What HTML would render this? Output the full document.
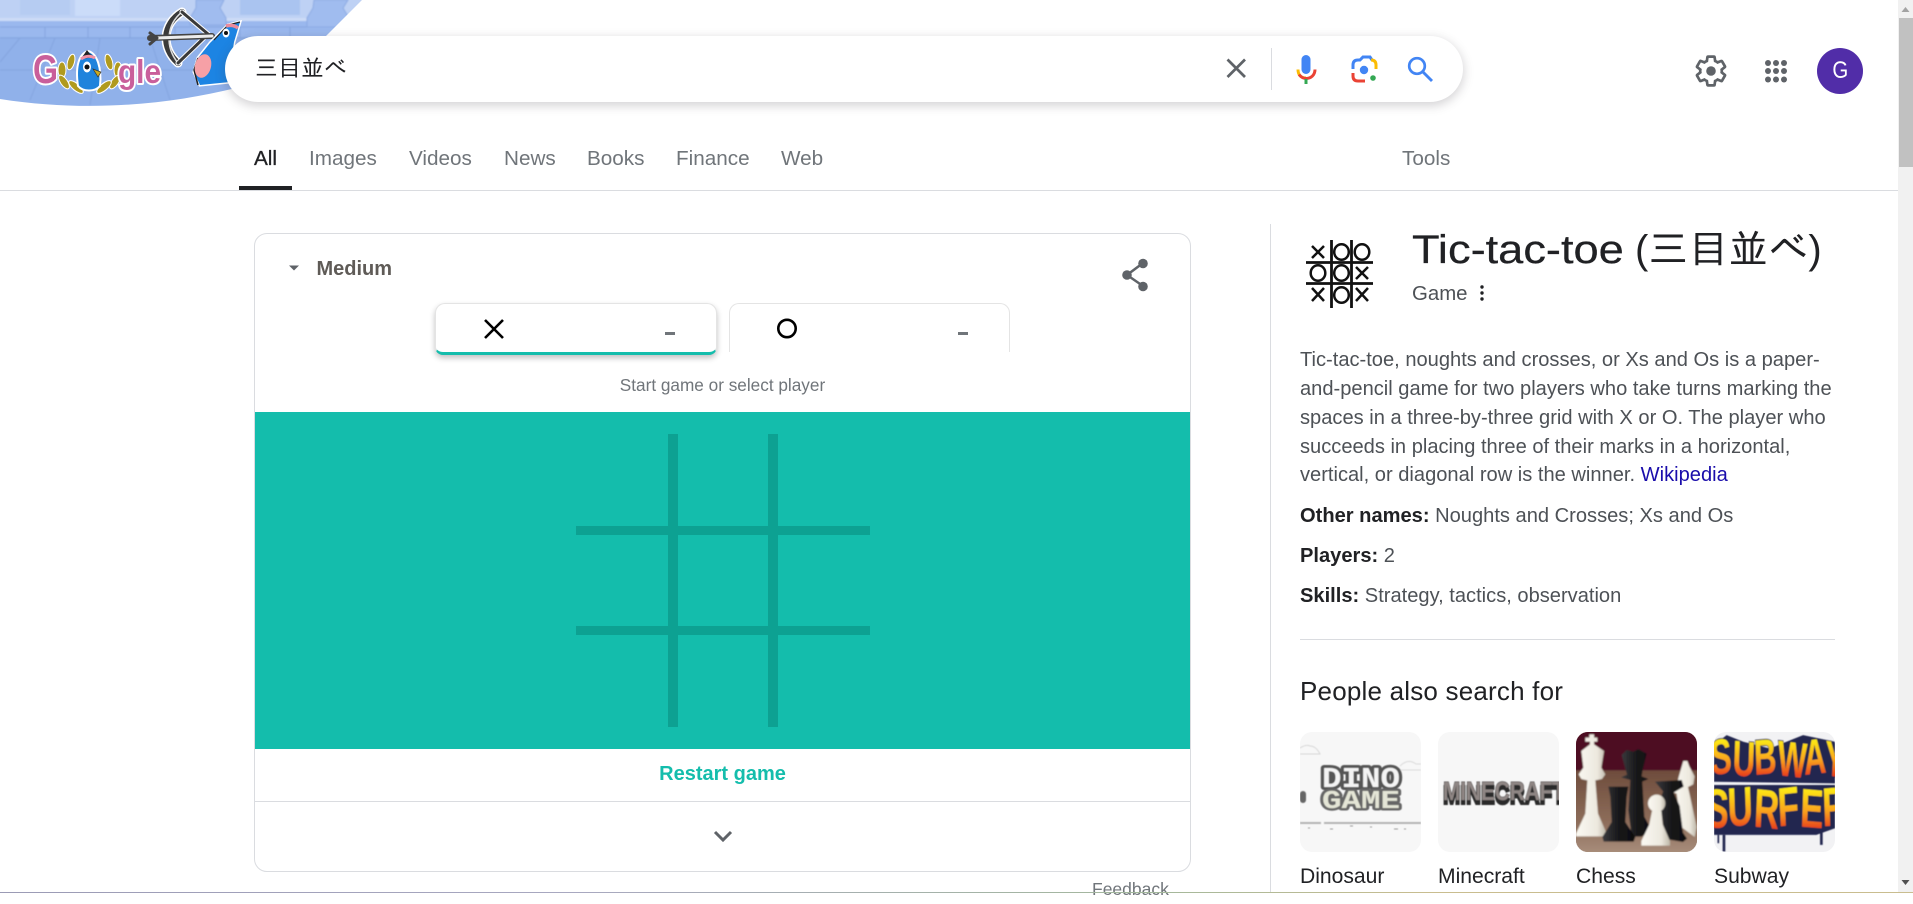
<!DOCTYPE html>
<html lang="ja"><head><meta charset="utf-8"><title>三目並べ</title>
<style>
html,body{margin:0;padding:0;background:#fff}
body{width:1913px;height:893px;overflow:hidden;position:relative;font-family:"Liberation Sans","Noto Sans CJK JP",sans-serif;color:#4d5156}
.t{position:absolute;white-space:nowrap;line-height:30px;height:30px}
.a{position:absolute}
svg{display:block;position:absolute;overflow:hidden}
.tab{font-size:20.700px;color:#70757a;top:144px}
.d{font-size:20.100px;color:#4d5156;left:1300px}
.d b{color:#202124}
.lab{font-size:21.100px;color:#202124;top:862px}
.img{position:absolute;top:732px;width:121px;height:120px;border-radius:12px;overflow:hidden;background:#f7f7f7}
.img svg{left:0;top:0}
</style></head><body>

<!-- doodle -->
<svg style="left:0;top:0" width="370" height="112" viewBox="0 0 370 112">
<defs><clipPath id="dc"><path d="M0 0H362L326 36V88H236C170 104 90 113 0 99Z"/></clipPath>
<filter id="bl" x="-5%" y="-5%" width="110%" height="110%"><feGaussianBlur stdDeviation=".8"/></filter></defs>
<g clip-path="url(#dc)"><g filter="url(#bl)">
<rect x="-5" y="-5" width="380" height="120" fill="#90b1ea"/>
<rect x="-5" y="-5" width="380" height="23" fill="#bed1f4"/>
<rect x="20" y="-5" width="50" height="20" fill="#b6ccf2"/><rect x="75" y="-5" width="45" height="21" fill="#cbdcf9"/>
<rect x="240" y="-5" width="60" height="20" fill="#aac4f0"/>
<rect y="18" x="-5" width="380" height="3" fill="#cddcf7"/>
<rect y="21" x="-5" width="380" height="16" fill="#9ab8ee"/>
<g stroke="#84a4de" stroke-width="1" fill="none">
<path d="M0 27H370M0 38H370M45 27V38M88 27V38M130 27V38M175 27V38M240 27V38M290 27V38"/>
<path d="M20 38L0 62M55 38L30 100M100 38L90 105M150 38L170 100M205 38L230 85M0 70H240"/>
</g>
<path d="M196 0h28l-4 8 6 10v7h-36v-7l6-10z" fill="#a0bcef" stroke="#8aa9e2"/>
<path d="M314 0h34l-5 8 6 10v9h-42v-9l6-10z" fill="#a0bcef" stroke="#8aa9e2"/>
</g></g>
<!-- logo -->
<g fill="#b09a1e" stroke="#fff" stroke-width="1">
<ellipse cx="62" cy="70" rx="4" ry="8"/><ellipse cx="71" cy="62" rx="3.500" ry="8" transform="rotate(15 71 62)"/><ellipse cx="64" cy="82" rx="3.500" ry="8" transform="rotate(-35 64 82)"/><ellipse cx="76" cy="87" rx="9" ry="3.500" transform="rotate(40 76 87)"/>
<ellipse cx="118" cy="70" rx="4" ry="8"/><ellipse cx="109" cy="62" rx="3.500" ry="8" transform="rotate(-15 109 62)"/><ellipse cx="115" cy="82" rx="3.500" ry="8" transform="rotate(35 115 82)"/><ellipse cx="104" cy="87" rx="9" ry="3.500" transform="rotate(-40 104 87)"/>
</g>
<g font-family="Liberation Sans,sans-serif" font-weight="700" fill="#c95f9b" stroke="#fff" stroke-width="4" paint-order="stroke" stroke-linejoin="round">
<text x="33" y="83" font-size="40" textLength="25" lengthAdjust="spacingAndGlyphs">G</text>
<text x="118" y="83" font-size="33" textLength="43" lengthAdjust="spacingAndGlyphs">gle</text>
</g>
<path d="M78 86C75 66 79 54 88 51 97 53 102 68 100 86 95 92 83 92 78 86Z" fill="#1f83dc" stroke="#fff" stroke-width="2"/>
<path d="M81 59 87 50 90 54 95 57Z" fill="#222"/>
<path d="M81 59Q88 54 95 58" stroke="#f090a5" stroke-width="3" fill="none"/>
<ellipse cx="87" cy="67" rx="4" ry="5.500" fill="#fff"/><circle cx="87" cy="67" r="2.500" fill="#111"/>
<path d="M93 69l8 3-3 5z" fill="#c9a81f" stroke="#333" stroke-width=".7"/>
<!-- archer -->
<g fill="none" stroke-linecap="round" stroke-linejoin="round">
<path d="M182 12C162 24 161 48 178 63" stroke="#fff" stroke-width="9"/>
<path d="M182 12C162 24 161 48 178 63" stroke="#3a3a3a" stroke-width="6"/>
<path d="M182 12C166 25 165 47 178 63" stroke="#ddd" stroke-width="1.500"/>
<path d="M182 12 208 34 178 63" stroke="#fff" stroke-width="5"/>
<path d="M182 12 208 34 178 63" stroke="#3a3a3a" stroke-width="3"/>
<path d="M150 38 212 36" stroke="#444" stroke-width="6"/>
<path d="M156 38 212 36" stroke="#ececec" stroke-width="3"/>
<path d="M150 33l7 5-7 6" stroke="#444" stroke-width="3"/>
</g>
<path d="M240 22 228 25 210 43 198 58 194 72 200 85 230 82 232 55 234 42Z" fill="#1c84e3" stroke="#fff" stroke-width="3" paint-order="stroke"/>
<path d="M240 22 228 25 214 40" fill="none" stroke="#222" stroke-width="1.200"/>
<path d="M198 85 194 70 198 58" fill="none" stroke="#222" stroke-width="1.500"/>
<path d="M226 26Q233 24 238 28" stroke="#ec8a9c" stroke-width="3.500" fill="none"/>
<ellipse cx="226" cy="33" rx="3.500" ry="4.500" fill="#fff"/><circle cx="226" cy="33" r="2" fill="#111"/>
<ellipse cx="203" cy="66" rx="8" ry="12" fill="#f6a0a6" transform="rotate(15 203 66)"/>
</svg>

<!-- search box -->
<div class="a" style="left:225px;top:36px;width:1238px;height:66px;border-radius:33px;background:#fff;box-shadow:0 3px 10px 1px rgba(64,60,67,.22)"></div>
<div class="t" style="left:255px;top:53px;font-size:23px;color:#202124;font-family:'Liberation Sans','IPAGothic','Noto Sans CJK JP',sans-serif">三目並べ</div>
<svg style="left:1222px;top:44px" width="240" height="50" viewBox="1222 44 240 50">
<path d="M1227.500 59.500 1245 77M1245 59.500 1227.500 77" stroke="#5f6368" stroke-width="2.700" fill="none"/>
<rect x="1271" y="48" width="1" height="42" fill="#dadce0"/>
<rect x="1301.500" y="55" width="9" height="19" rx="4.500" fill="#4285f4"/>
<path d="M1298 69.500C1298 75 1301 78 1306 78" stroke="#fbbc04" stroke-width="3" fill="none"/>
<path d="M1299 74.500C1301 77 1303 78.500 1306 78.500 1311 78.500 1315 75 1315 69.500" stroke="#ea4335" stroke-width="3" fill="none"/>
<rect x="1304.500" y="79" width="3" height="5" fill="#34a853"/>
<path d="M1353 69V65Q1353 60 1358 60H1360L1363 57H1370L1372 60" stroke="#4285f4" stroke-width="3" fill="none"/>
<path d="M1371 60Q1376 60 1376 65V69" stroke="#fbbc04" stroke-width="3" fill="none"/>
<path d="M1353 73V76Q1353 81 1358 81H1365" stroke="#ea4335" stroke-width="3" fill="none"/>
<circle cx="1364" cy="70" r="4.200" fill="#4285f4"/><circle cx="1373" cy="78" r="2.800" fill="#34a853"/>
<circle cx="1417" cy="66" r="7.800" stroke="#4285f4" stroke-width="2.700" fill="none"/>
<path d="M1423 72 1432 81" stroke="#4285f4" stroke-width="2.900"/>
</svg>

<!-- header right -->
<svg style="left:1693px;top:53px" width="36" height="36" viewBox="0 0 24 24"><path fill="none" stroke="#5f6368" stroke-width="1.800" d="M19.140 12.940c.04-.3.06-.61.06-.94 0-.32-.02-.64-.07-.94l2.030-1.580c.18-.14.23-.41.12-.61l-1.920-3.320c-.12-.22-.37-.29-.59-.22l-2.390.96c-.5-.38-1.030-.7-1.620-.94L14.400 2.810c-.04-.24-.24-.41-.48-.41h-3.840c-.24 0-.43.17-.47.41L9.250 5.350C8.660 5.590 8.120 5.920 7.630 6.290L5.240 5.330c-.22-.08-.47 0-.59.22L2.740 8.870C2.620 9.080 2.660 9.340 2.860 9.480l2.030 1.580C4.840 11.360 4.800 11.690 4.800 12s.02.64.07.94l-2.030 1.580c-.18.14-.23.41-.12.61l1.920 3.320c.12.22.37.29.59.22l2.390-.96c.5.38 1.030.7 1.620.94l.36 2.540c.05.24.24.41.48.41h3.840c.24 0 .44-.17.47-.41l.36-2.540c.59-.24 1.130-.56 1.620-.94l2.390.96c.22.08.47 0 .59-.22l1.920-3.320c.12-.22.07-.47-.12-.61L19.140 12.940z"/><circle cx="12" cy="12" r="3.200" fill="#5f6368"/></svg>
<svg style="left:1762px;top:57px" width="28" height="28" viewBox="0 0 28 28" fill="#5f6368"><circle cx="6" cy="6" r="3"/><circle cx="14" cy="6" r="3"/><circle cx="22" cy="6" r="3"/><circle cx="6" cy="14" r="3"/><circle cx="14" cy="14" r="3"/><circle cx="22" cy="14" r="3"/><circle cx="6" cy="22.500" r="3"/><circle cx="14" cy="22.500" r="3"/><circle cx="22" cy="22.500" r="3"/></svg>
<div class="a" style="left:1817px;top:48px;width:46px;height:46px;border-radius:50%;background:#512da8;color:#fff;font-size:24px;line-height:46px;text-align:center"><span style="display:inline-block;transform:scaleX(.85)">G</span></div>

<!-- tabs -->
<div class="t tab" style="left:254px;color:#202124;-webkit-text-stroke:.3px #202124">All</div>
<div class="t tab" style="left:309px">Images</div>
<div class="t tab" style="left:409px">Videos</div>
<div class="t tab" style="left:504px">News</div>
<div class="t tab" style="left:587px">Books</div>
<div class="t tab" style="left:676px">Finance</div>
<div class="t tab" style="left:781px">Web</div>
<div class="t tab" style="left:1402px">Tools</div>
<div class="a" style="left:239px;top:186px;width:53px;height:4px;background:#202124"></div>
<div class="a" style="left:0;top:190px;width:1898px;height:1px;background:#dadce0"></div>

<!-- game card -->
<div class="a" style="left:254px;top:233px;width:935px;height:637px;border:1px solid #dadce0;border-radius:13px"></div>
<svg style="left:287px;top:264px" width="14" height="8" viewBox="0 0 14 8"><path d="M2 1.500H12L7 6.500Z" fill="#5f6368"/></svg>
<div class="t" style="left:316.500px;top:254px;font-size:20px;font-weight:700;color:#5f5b57">Medium</div>
<svg style="left:1118px;top:258px" width="34" height="34" viewBox="1118 258 34 34"><path d="M1143 263 1127 275 1143 286" stroke="#5f6368" stroke-width="2.500" fill="none"/><circle cx="1143" cy="263.500" r="4.800" fill="#5f6368"/><circle cx="1127" cy="275" r="4.800" fill="#5f6368"/><circle cx="1143" cy="286.500" r="4.800" fill="#5f6368"/></svg>

<div class="a" style="left:435px;top:303px;width:280px;height:48px;border:1px solid #e4e4e4;border-radius:10px 10px 8px 8px;box-shadow:0 3px 6px rgba(32,33,36,.28);background:#fff;border-bottom:3px solid #14bdac"></div>
<div class="a" style="left:729px;top:303px;width:279px;height:48px;border:1px solid #e4e4e4;border-bottom:0;border-radius:10px 10px 0 0;background:#fff"></div>
<svg style="left:480px;top:315px" width="28" height="28" viewBox="0 0 28 28"><path d="M5 5 23 23M23 5 5 23" stroke="#000" stroke-width="2.600"/></svg>
<svg style="left:773px;top:315px" width="28" height="28" viewBox="0 0 28 28"><circle cx="14" cy="13.500" r="8.700" stroke="#000" stroke-width="2.600" fill="none"/></svg>
<div class="a" style="left:665px;top:332px;width:10px;height:3px;background:#70757a"></div>
<div class="a" style="left:958px;top:332px;width:10px;height:3px;background:#70757a"></div>
<div class="t" style="left:255px;width:935px;text-align:center;top:370px;font-size:17.200px;color:#70757a">Start game or select player</div>

<div class="a" style="left:255px;top:412px;width:935px;height:337px;background:#14bdac"></div>
<div class="a" style="left:668px;top:434px;width:10px;height:293px;background:#0da192"></div>
<div class="a" style="left:768px;top:434px;width:10px;height:293px;background:#0da192"></div>
<div class="a" style="left:576px;top:526px;width:294px;height:9px;background:#0da192"></div>
<div class="a" style="left:576px;top:626px;width:294px;height:9px;background:#0da192"></div>

<div class="t" style="left:255px;width:935px;text-align:center;top:759px;font-size:20px;font-weight:700;color:#14bdac">Restart game</div>
<div class="a" style="left:255px;top:801px;width:935px;height:1px;background:#dadce0"></div>
<svg style="left:711px;top:827px" width="24" height="20" viewBox="0 0 24 20"><path d="M4 5 12 13 20 5" stroke="#5f6368" stroke-width="3" fill="none"/></svg>
<div class="t" style="left:1092px;top:874px;font-size:17.500px;color:#70757a">Feedback</div>

<!-- right panel -->
<div class="a" style="left:1270px;top:224px;width:1px;height:669px;background:#dadce0"></div>
<svg style="left:1300px;top:236px" width="80" height="78" viewBox="1300 236 80 78" fill="none" stroke="#111">
<path d="M1331.500 240V308M1351.500 240V308M1306 262.500H1373M1306 283.500H1373" stroke-width="2.800"/>
<g stroke-width="2.500"><path d="M1312 246 1324 258M1324 246 1312 258M1356 267 1368 279M1368 267 1356 279M1312 288 1324 301M1324 288 1312 301M1356 288 1368 301M1368 288 1356 301"/>
<ellipse cx="1341.500" cy="252" rx="7.300" ry="7.800"/><ellipse cx="1362" cy="252" rx="7.300" ry="7.800"/><ellipse cx="1318" cy="273" rx="7.300" ry="7.800"/><ellipse cx="1341.500" cy="273" rx="7.300" ry="7.800"/><ellipse cx="1341.500" cy="295" rx="7.300" ry="7.800"/></g>
</svg>
<div class="t" style="left:1412px;top:235px;font-size:40px;color:#202124;transform:scaleX(1.13);transform-origin:left center;-webkit-text-stroke:.25px #202124">Tic-tac-toe</div>
<div class="t" style="left:1635px;top:235px;font-size:40px;color:#202124;font-family:'Liberation Sans','IPAGothic','Noto Sans CJK JP',sans-serif">(三目並べ)</div>
<div class="t" style="left:1412px;top:279px;font-size:20.400px;color:#4d5156">Game</div>
<svg style="left:1476px;top:282px" width="12" height="22" viewBox="0 0 12 22" fill="#202124"><circle cx="6" cy="5" r="1.700"/><circle cx="6" cy="11" r="1.700"/><circle cx="6" cy="17" r="1.700"/></svg>
<div class="t d" style="top:345px">Tic-tac-toe, noughts and crosses, or Xs and Os is a paper-</div>
<div class="t d" style="top:374px">and-pencil game for two players who take turns marking the</div>
<div class="t d" style="top:403px">spaces in a three-by-three grid with X or O. The player who</div>
<div class="t d" style="top:432px">succeeds in placing three of their marks in a horizontal,</div>
<div class="t d" style="top:460px">vertical, or diagonal row is the winner. <span style="color:#1a0dab">Wikipedia</span></div>
<div class="t d" style="top:501px"><b>Other names:</b> Noughts and Crosses; Xs and Os</div>
<div class="t d" style="top:541px"><b>Players:</b> 2</div>
<div class="t d" style="top:581px"><b>Skills:</b> Strategy, tactics, observation</div>
<div class="a" style="left:1300px;top:639px;width:535px;height:1px;background:#dadce0"></div>
<div class="t" style="left:1300px;top:676px;font-size:26px;letter-spacing:.2px;color:#202124">People also search for</div>

<div class="img" style="left:1300px">
<svg width="121" height="120" viewBox="0 0 121 120">
<defs><filter id="b1" x="-5%" y="-5%" width="110%" height="110%"><feGaussianBlur stdDeviation=".5"/></filter></defs>
<g filter="url(#b1)">
<path d="M0 16Q6 12 10 14 16 14 20 22H0" fill="none" stroke="#d8d8d8"/>
<path d="M100 34Q108 26 116 32H121M96 38H121" fill="none" stroke="#dcdcdc"/>
<g font-family="Liberation Mono,monospace" font-weight="700" stroke-linejoin="round" paint-order="stroke">
<text x="22" y="55" font-size="29" fill="#f4f4f4" stroke="#555" stroke-width="6" textLength="78" lengthAdjust="spacingAndGlyphs">DINO</text>
<text x="22" y="76" font-size="26" fill="#e4e5d6" stroke="#666" stroke-width="5" textLength="78" lengthAdjust="spacingAndGlyphs">GAME</text>
</g>
<rect x="0" y="59" width="6" height="12" rx="3" fill="#666"/>
<rect y="90" width="21" height="2" fill="#b5b5b5"/><rect x="24" y="90" width="97" height="2" fill="#b5b5b5"/>
<path d="M8 96h2M30 97h3M50 94h3M70 95h2M94 97h4M104 97h2" stroke="#999" stroke-width="1"/>
</g></svg></div>

<div class="img" style="left:1438px">
<svg width="121" height="120" viewBox="0 0 121 120">
<defs><filter id="b2" x="-5%" y="-5%" width="110%" height="110%"><feGaussianBlur stdDeviation=".45"/></filter></defs>
<g filter="url(#b2)" font-family="Liberation Sans,sans-serif" font-weight="700" font-size="26">
<text x="5" y="72" fill="#2a2a2a" stroke="#2a2a2a" stroke-width="2" textLength="122" lengthAdjust="spacingAndGlyphs">MINECRAFT</text>
<text x="5" y="68" fill="#8f8684" stroke="#3a3a3a" stroke-width="1" paint-order="stroke" textLength="122" lengthAdjust="spacingAndGlyphs">MINECRAFT</text>
</g></svg></div>

<div class="img" style="left:1576px;background:#8a6a58">
<svg width="121" height="120" viewBox="18 21 363 360">
<defs><filter id="b3" x="-5%" y="-5%" width="110%" height="110%"><feGaussianBlur stdDeviation="2.500"/></filter>
<linearGradient id="bd" x1="0" y1="0" x2="0" y2="1"><stop offset="0" stop-color="#6e4c3c"/><stop offset=".6" stop-color="#8d6d5a"/><stop offset="1" stop-color="#ab917f"/></linearGradient>
<linearGradient id="wp" x1="0" y1="0" x2="1" y2="0"><stop offset="0" stop-color="#fbf9f2"/><stop offset=".7" stop-color="#ece8de"/><stop offset="1" stop-color="#bdb7a8"/></linearGradient>
<linearGradient id="kp" x1="0" y1="0" x2="1" y2="0"><stop offset="0" stop-color="#3a3a3e"/><stop offset=".5" stop-color="#18181a"/><stop offset="1" stop-color="#0c0c0e"/></linearGradient></defs>
<g filter="url(#b3)">
<rect x="0" y="0" width="400" height="140" fill="#4e0d22"/>
<rect x="0" y="136" width="400" height="260" fill="url(#bd)"/>
<path d="M58 28h14v10h10v12H72v8l30 20-8 50 12 20-10 14 -20 4 8 100 26 60v8H18v-8l28-60 6-100-18-4-8-14 14-20-6-50 26-20v-8H46V38h12z" fill="url(#wp)"/>
<path d="M340 108h12l6 16 16 30-4 24-16 8 26 120-6 30-40-30-14-100-10-4 10-20 6-26z" fill="url(#wp)"/>
<path d="M155 90l15-15 20 5 15-8 25 14-12 50-3 18 20 8-18 8 6 105 22 40-30 20h-30l-10-80 6-90-28-8 18-8z" fill="url(#kp)"/>
<path d="M115 185h60l-5 30-4 76 30 45-5 14h-90l-4-14 28-45-4-76z" fill="url(#kp)"/>
<path d="M255 170l80-5 6 20-30 18 18 40 10 80 12 18-12 10-70-12 10-40-10-70 10-30z" fill="url(#kp)"/>
<circle cx="260" cy="235" r="26" fill="url(#wp)"/>
<path d="M246 258h28l4 40 22 50v14h-86v-14l24-50z" fill="url(#wp)"/>
</g></svg></div>

<div class="img" style="left:1714px;background:#f2f2f4">
<svg width="121" height="120" viewBox="432 21 364 360">
<defs>
<linearGradient id="sg2" gradientUnits="userSpaceOnUse" x1="0" y1="40" x2="0" y2="150"><stop offset="0" stop-color="#fdf013"/><stop offset=".6" stop-color="#f9a11c"/><stop offset="1" stop-color="#e8431c"/></linearGradient>
<linearGradient id="sg3" gradientUnits="userSpaceOnUse" x1="0" y1="185" x2="0" y2="310"><stop offset="0" stop-color="#fdf013"/><stop offset=".6" stop-color="#f9a11c"/><stop offset="1" stop-color="#e8431c"/></linearGradient>
<filter id="b4" x="-5%" y="-5%" width="110%" height="110%"><feGaussianBlur stdDeviation="1.500"/></filter>
</defs>
<g filter="url(#b4)">
<path d="M432 60 470 30 520 50 600 70 700 30 796 50V175L432 170ZM432 180H796V310L740 330H432Z" fill="#24264f"/>
<g font-family="Liberation Sans,sans-serif" font-weight="700" stroke="#24264f" stroke-width="5" paint-order="stroke">
<text x="425" y="150" font-size="150" fill="url(#sg2)" textLength="400" lengthAdjust="spacingAndGlyphs" rotate="-4 3 -3 4 -4 5">SUBWAY</text>
<text x="405" y="305" font-size="165" fill="url(#sg3)" textLength="500" lengthAdjust="spacingAndGlyphs" rotate="3 -3 4 -4 3 -3 4">SURFERS</text>
</g>
<path d="M462 330v50M755 320v40" stroke="#24264f" stroke-width="8"/>
<path d="M445 330v25" stroke="#24264f" stroke-width="5"/>
</g></svg></div>

<div class="t lab" style="left:1300px">Dinosaur</div>
<div class="t lab" style="left:1438px">Minecraft</div>
<div class="t lab" style="left:1576px">Chess</div>
<div class="t lab" style="left:1714px">Subway</div>

<!-- scrollbar -->
<div class="a" style="left:1898px;top:0;width:15px;height:893px;background:#f1f1f1"></div>
<div class="a" style="left:1899px;top:18px;width:14px;height:149px;background:#c1c1c1"></div>
<svg style="left:1898px;top:0" width="15" height="893" viewBox="0 0 15 893"><path d="M3.500 12 7.500 7 11.500 12Z" fill="#a3a3a3"/><path d="M3.500 880 7.500 885 11.500 880Z" fill="#505050"/></svg>
<!-- window edge -->
<div class="a" style="left:0;top:892px;width:1913px;height:1px;background:linear-gradient(90deg,#9b9bb5 0%,#a8a8c0 30%,#a3b89c 60%,#c9bd8f 75%,#c9bd8f 100%)"></div>
</body></html>
